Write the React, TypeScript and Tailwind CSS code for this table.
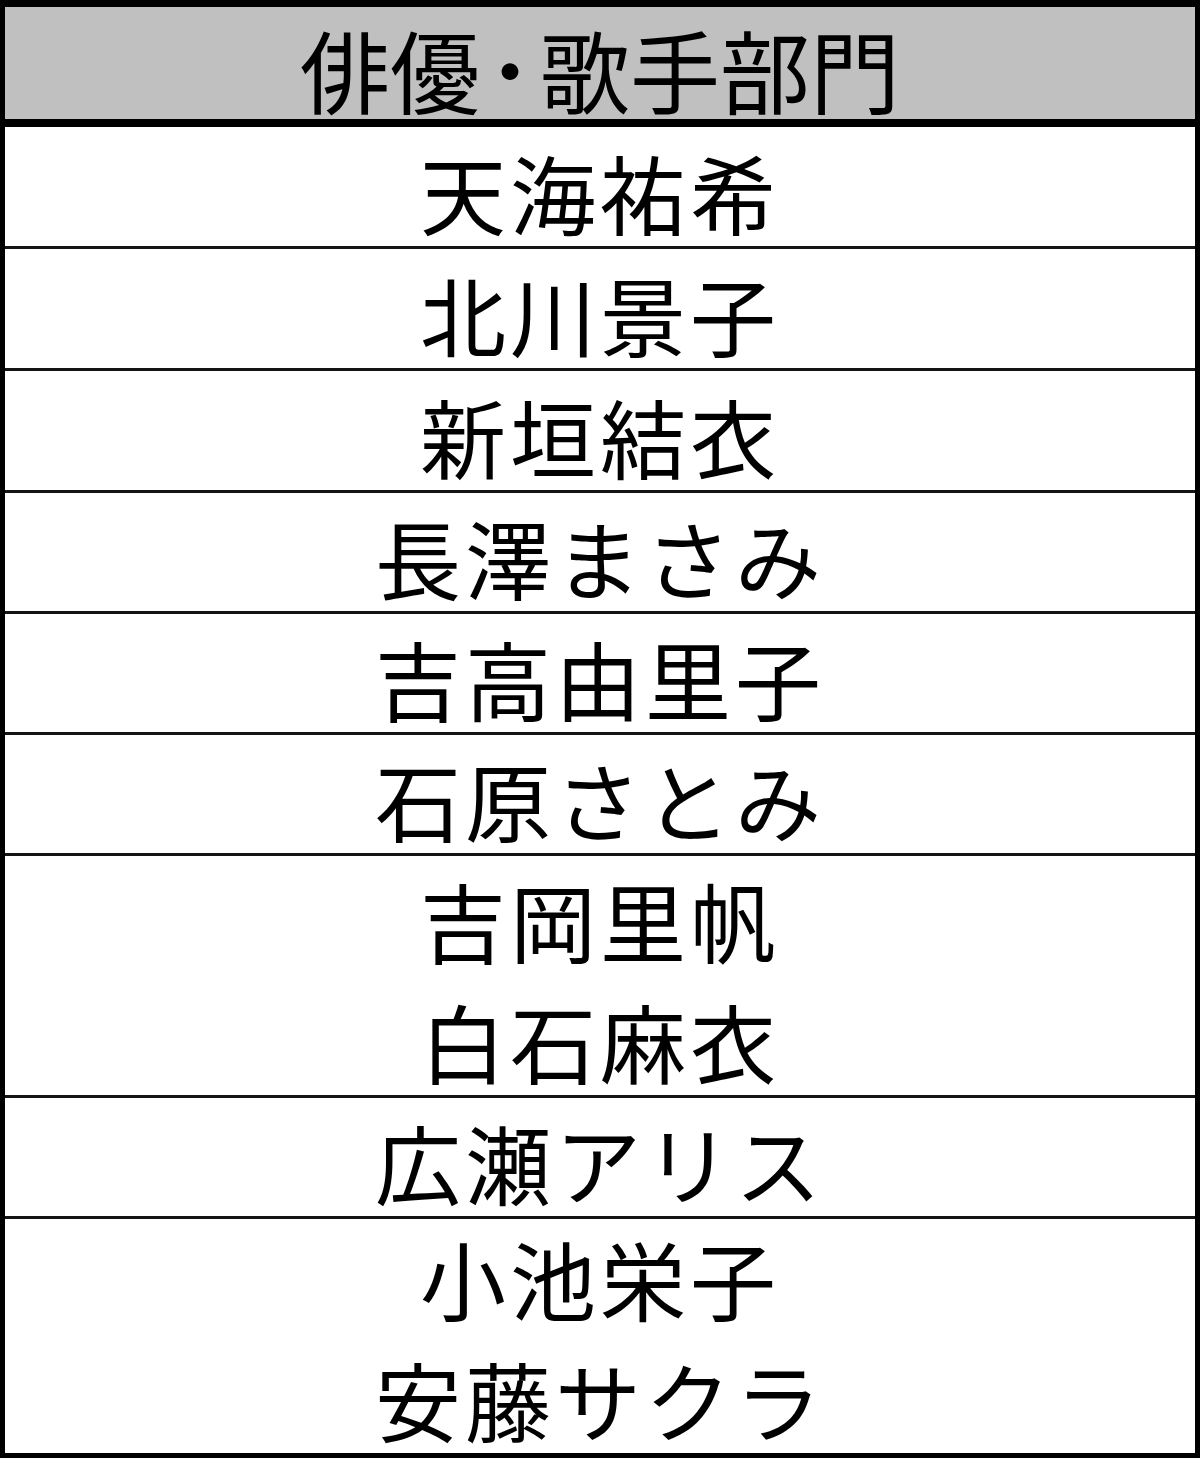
const rows: { names: string[]; h: string }[] = [
  { names: ['天海祐希'], h: 'h-[122px]' },
  { names: ['北川景子'], h: 'h-[122px]' },
  { names: ['新垣結衣'], h: 'h-[122px]' },
  { names: ['長澤まさみ'], h: 'h-[121px]' },
  { names: ['吉高由里子'], h: 'h-[121px]' },
  { names: ['石原さとみ'], h: 'h-[121px]' },
  { names: ['吉岡里帆', '白石麻衣'], h: 'h-[242px]' },
  { names: ['広瀬アリス'], h: 'h-[121px]' },
  { names: ['小池栄子', '安藤サクラ'], h: 'h-[234px]' },
];

const App = () => {
  return (
    <div
      className="w-[1200px] h-[1458px] bg-white text-black"
      style={{ fontFamily: '"Noto Sans CJK JP", "Noto Sans", sans-serif' }}
    >
      <div className="h-full border-t-[7px] border-l-[5px] border-r-[5px] border-b-[5px] border-black flex flex-col">
        {/* header */}
        <div className="h-[120px] shrink-0 bg-[#c0c0c0] border-b-[8px] border-black flex items-end justify-center pb-[6px]">
          <span className="text-[90px] leading-none">俳優</span>
          <span className="text-[60px] leading-none font-black mb-[14px]">・</span>
          <span className="text-[90px] leading-none">歌手部門</span>
        </div>

        {rows.map((row, i) => (
          <div
            key={i}
            className={`${row.h} shrink-0 flex flex-col justify-end items-center pb-[11px] ${
              i < rows.length - 1 ? 'border-b-[3px] border-[#141414]' : ''
            }`}
          >
            {row.names.map((name, j) => (
              <div
                key={j}
                className={`text-[86px] leading-none tracking-[4px] ${j < row.names.length - 1 ? 'mb-[35px]' : ''}`}
              >
                {name}
              </div>
            ))}
          </div>
        ))}
      </div>
    </div>
  );
};

export default App;
